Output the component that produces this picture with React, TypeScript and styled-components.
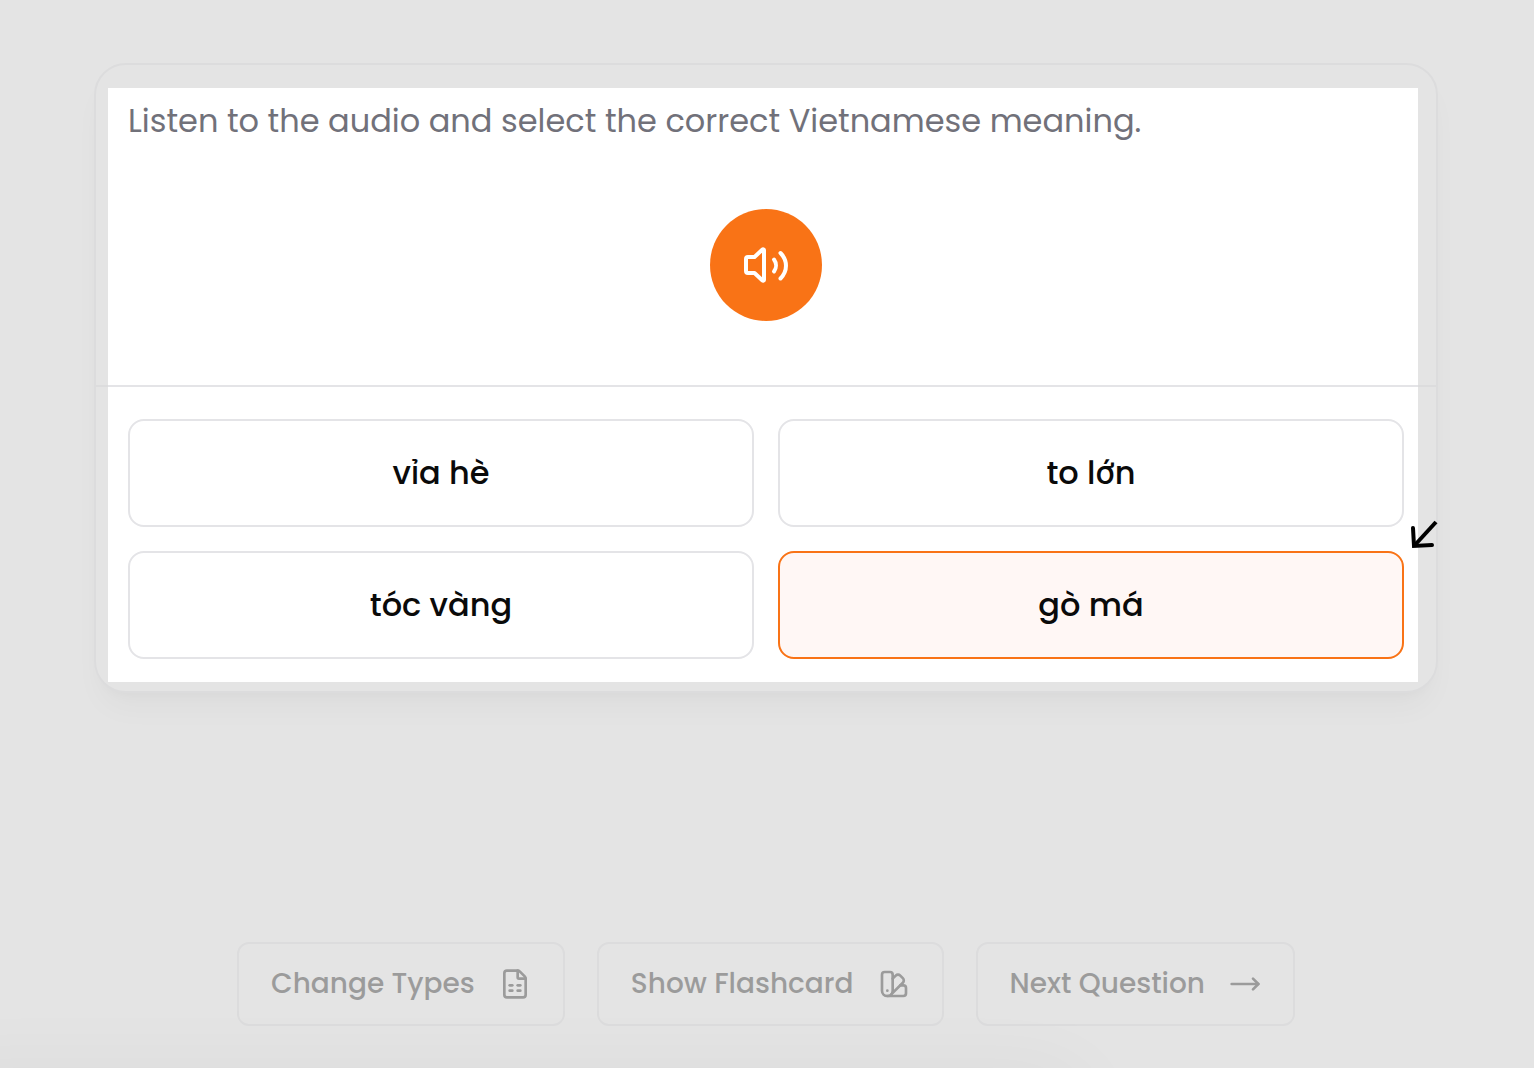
import React, { useState } from "react";
import styled, { createGlobalStyle } from "styled-components";
import { FileSpreadsheet, MoveRight, SwatchBook } from "lucide-react";

const GlobalStyle = createGlobalStyle`
  *, *::before, *::after { box-sizing: border-box; }
  body {
    margin: 0;
    background: #ffffff;
    color: #0a0a0a;
    font-family: Poppins, Inter, "Noto Sans", sans-serif;
  }
  button { font: inherit; color: inherit; cursor: pointer; }
`;

const Page = styled.div`
  position: relative;
  display: flex;
  flex-direction: column;
  min-height: 100vh;
  padding: 63px 96px 42px 94px;
  overflow: hidden;
`;

const Card = styled.main`
  position: relative;
  border: 2px solid #e4e4e7;
  border-radius: 32px;
  background: #ffffff;
  box-shadow: 0 20px 30px -6px rgba(0, 0, 0, 0.1), 0 8px 12px -8px rgba(0, 0, 0, 0.1);
`;

const Prompt = styled.section`
  display: flex;
  flex-direction: column;
  gap: 64px;
  padding: 32px 32px 64px;
  border-bottom: 2px solid #e4e4e7;
`;

const Instruction = styled.h1`
  margin: 0;
  color: #71717a;
  font-size: 32px;
  font-weight: 400;
  line-height: 48px;
`;

const PlayButton = styled.button`
  display: grid;
  place-items: center;
  align-self: center;
  width: 112px;
  height: 112px;
  padding: 0;
  border: 0;
  border-radius: 50%;
  background: #f97316;
  color: #ffffff;
`;

const Answers = styled.section`
  display: grid;
  grid-template-columns: repeat(2, minmax(0, 1fr));
  gap: 24px;
  padding: 32px;
`;

const Answer = styled.button<{ $selected: boolean }>`
  height: 108px;
  padding: 0 24px;
  border: 2px solid ${(p) => (p.$selected ? "#f97316" : "#e4e4e7")};
  border-radius: 16px;
  background: ${(p) => (p.$selected ? "#fff7f5" : "#ffffff")};
  font-size: 32px;
  font-weight: 500;
  line-height: 48px;
`;

const Spotlight = styled.div`
  position: absolute;
  z-index: 1;
  inset: 23px 18px 9px 12px;
  box-shadow: 0 0 0 9999px rgba(216, 216, 216, 0.7);
  pointer-events: none;
`;

const Pointer = styled.svg`
  position: absolute;
  z-index: 2;
  right: -4px;
  bottom: 140px;
  pointer-events: none;
`;

const Actions = styled.nav`
  display: flex;
  justify-content: center;
  gap: 32px;
  margin-top: auto;
`;

const ActionButton = styled.button`
  display: flex;
  align-items: center;
  gap: 24px;
  height: 84px;
  padding: 0 32px;
  border: 2px solid #e4e4e7;
  border-radius: 12px;
  background: #ffffff;
  font-size: 28px;
  font-weight: 500;
  line-height: 40px;
  white-space: nowrap;
`;

const BottomShade = styled.div`
  position: absolute;
  top: 100%;
  left: -80px;
  width: 76%;
  height: 80px;
  border-radius: 40px;
  box-shadow: 0 4px 80px rgba(0, 0, 0, 0.14);
`;

const words = ["vỉa hè", "to lớn", "tóc vàng", "gò má"];

function SpeakerIcon() {
  return (
    <svg width="48" height="48" viewBox="0 0 48 48" fill="none" stroke="currentColor" strokeWidth="4" strokeLinecap="round" strokeLinejoin="round" aria-hidden="true">
      <path d="M4 18a2 2 0 0 1 2-2h6.500L20.500 8.500A.9.9 0 0 1 22 9v30a.9.9 0 0 1-1.500.5L12.500 32H6a2 2 0 0 1-2-2Z" />
      <path d="M32 18.500c2.600 3.500 2.600 8.500 0 12" />
      <path d="M38.500 12c7.300 7.500 7.300 18 0 25.500" />
    </svg>
  );
}

export default function App() {
  const [selected, setSelected] = useState("gò má");
  return (
    <>
      <GlobalStyle />
      <Page>
        <Card>
          <Prompt>
            <Instruction>Listen to the audio and select the correct Vietnamese meaning.</Instruction>
            <PlayButton type="button" aria-label="Play audio">
              <SpeakerIcon />
            </PlayButton>
          </Prompt>
          <Answers>
            {words.map((word) => (
              <Answer
                key={word}
                type="button"
                $selected={word === selected}
                aria-pressed={word === selected}
                onClick={() => setSelected(word)}
              >
                {word}
              </Answer>
            ))}
          </Answers>
          <Spotlight />
          <Pointer width="32" height="32" viewBox="0 0 32 32" fill="none" stroke="#000000" strokeWidth="4" aria-hidden="true">
            <path d="M28 3 6 27" />
            <path d="M5 9l1 18 18-1" strokeLinecap="round" strokeLinejoin="miter" />
          </Pointer>
        </Card>
        <Actions>
          <ActionButton type="button">
            Change Types
            <FileSpreadsheet size={32} aria-hidden="true" />
          </ActionButton>
          <ActionButton type="button">
            Show Flashcard
            <SwatchBook size={32} aria-hidden="true" />
          </ActionButton>
          <ActionButton type="button">
            Next Question
            <MoveRight size={32} aria-hidden="true" />
          </ActionButton>
        </Actions>
        <BottomShade />
      </Page>
    </>
  );
}
